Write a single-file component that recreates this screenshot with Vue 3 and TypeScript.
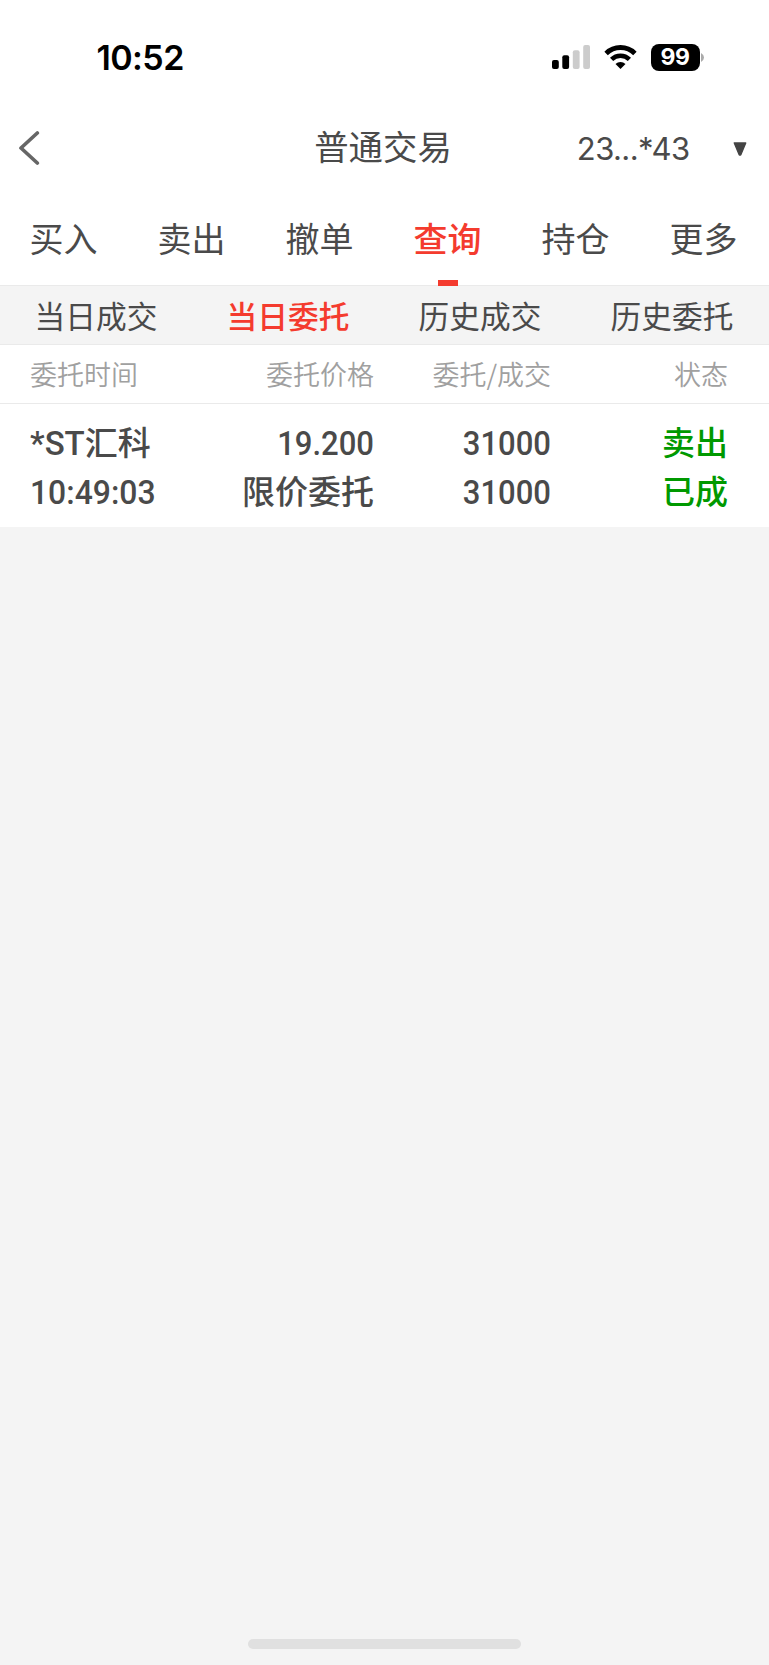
<script setup lang="ts">
interface Tab {
  label: string
  active?: boolean
}

const tabs: Tab[] = [
  { label: '买入' },
  { label: '卖出' },
  { label: '撤单' },
  { label: '查询', active: true },
  { label: '持仓' },
  { label: '更多' },
]

const subTabs: Tab[] = [
  { label: '当日成交' },
  { label: '当日委托', active: true },
  { label: '历史成交' },
  { label: '历史委托' },
]

const columns: string[] = ['委托时间', '委托价格', '委托/成交', '状态']

const order = {
  name: '汇科',
  prefix: '*ST',
  time: '10:49:03',
  price: '19.200',
  type: '限价委托',
  ordered: '31000',
  filled: '31000',
  side: '卖出',
  status: '已成',
}
</script>

<template>
  <main class="screen">
    <header class="status-bar">
      <span class="clock">10:52</span>
      <div class="indicators">
        <svg class="signal" width="38" height="24" viewBox="0 0 38 24">
          <rect x="0" y="15" width="6.8" height="9" rx="2" fill="#000" />
          <rect x="10.3" y="10.2" width="6.8" height="13.8" rx="2" fill="#000" />
          <rect x="20.8" y="5.2" width="6.8" height="18.8" rx="2" fill="#ccc" />
          <rect x="31.2" y="0" width="6.8" height="24" rx="2" fill="#ccc" />
        </svg>
        <svg class="wifi" width="33" height="24" viewBox="0 0 33 24">
          <path d="M2.1 8.4a20.6 20.6 0 0 1 28.8 0" fill="none" stroke="#000" stroke-width="4.9" />
          <path d="M7.6 14.3a12.8 12.8 0 0 1 17.8 0" fill="none" stroke="#000" stroke-width="4.6" />
          <path d="M11.5 18.9a7.2 7.2 0 0 1 10 0L16.5 24z" fill="#000" />
        </svg>
        <div class="battery">99</div>
        <svg class="battery-tip" width="3" height="9" viewBox="0 0 3 9">
          <path d="M0 0Q3 1.7 3 4.5T0 9z" fill="#aaa" />
        </svg>
      </div>
    </header>

    <nav class="title-bar">
      <svg class="back" width="21" height="34" viewBox="0 0 21 34">
        <path d="M18.3 2L2 17l16.3 15" fill="none" stroke="#666" stroke-width="3.7" stroke-linecap="round" stroke-linejoin="round" />
      </svg>
      <h1 class="title">普通交易</h1>
      <div class="account">
        <span>23...*43</span>
        <svg class="caret" width="14" height="14" viewBox="0 0 14 14">
          <path d="M1.3 1h11.4L7.8 12.7Q7 13.5 6.2 12.7z" fill="#444" stroke="#444" stroke-width="1.4" stroke-linejoin="round" />
        </svg>
      </div>
    </nav>

    <div class="tabs">
      <div v-for="tab in tabs" :key="tab.label" class="tab" :class="{ active: tab.active }">
        {{ tab.label }}
      </div>
    </div>

    <div class="sub-tabs">
      <div v-for="tab in subTabs" :key="tab.label" class="sub-tab" :class="{ active: tab.active }">
        {{ tab.label }}
      </div>
    </div>

    <div class="grid head">
      <span v-for="column in columns" :key="column">{{ column }}</span>
    </div>

    <section class="grid order">
      <div class="cell">
        <div class="name"><span class="prefix">{{ order.prefix }}</span><span class="cjk">{{ order.name }}</span></div>
        <span class="num time">{{ order.time }}</span>
      </div>
      <div class="cell">
        <span class="num">{{ order.price }}</span>
        <span class="cjk">{{ order.type }}</span>
      </div>
      <div class="cell">
        <span class="num">{{ order.ordered }}</span>
        <span class="num">{{ order.filled }}</span>
      </div>
      <div class="cell sell">
        <span class="cjk">{{ order.side }}</span>
        <span class="cjk">{{ order.status }}</span>
      </div>
    </section>

    <footer class="home"><i class="home-bar"></i></footer>
  </main>
</template>

<style>
body {
  margin: 0;
  background: #f4f4f4;
}
</style>

<style scoped>
.screen {
  display: flex;
  flex-direction: column;
  width: 769px;
  height: 1665px;
  overflow: hidden;
  background: #f4f4f4;
  color: #4a4a4a;
  font-family: "Noto Sans CJK SC", sans-serif;
  white-space: nowrap;
}

.status-bar {
  display: flex;
  flex: none;
  justify-content: space-between;
  box-sizing: border-box;
  height: 104px;
  padding: 38px 65.5px 0 96.5px;
  background: #fff;
  color: #000;
  font-family: Inter, sans-serif;
}

.clock {
  font-size: 34px;
  font-weight: 600;
  line-height: 40px;
  letter-spacing: -0.6px;
}

.indicators {
  display: flex;
  align-items: center;
  height: 38px;
}

.wifi {
  margin: 0 14px;
}

.battery {
  width: 49px;
  height: 27px;
  border-radius: 8px;
  background: #000;
  color: #fff;
  font-size: 23px;
  font-weight: 700;
  line-height: 27px;
  letter-spacing: -0.4px;
  text-align: center;
}

.battery-tip {
  margin-left: 1px;
}

.title-bar {
  display: grid;
  flex: none;
  grid-template-columns: 1fr auto 1fr;
  align-items: center;
  height: 88px;
  padding: 0 22px 0 19px;
  background: #fff;
}

.title {
  margin: 0;
  font-size: 34.4px;
  font-weight: 400;
  line-height: 83px;
  height: 88px;
}

.account {
  display: flex;
  align-items: center;
  justify-content: flex-end;
  gap: 43.5px;
  font-family: Inter, sans-serif;
  font-size: 31px;
  letter-spacing: -0.6px;
}

.caret {
  margin-top: 2px;
}

.tabs {
  display: grid;
  flex: none;
  grid-template-columns: repeat(6, 128px);
  height: 93px;
  border-bottom: 1px solid #eaeaea;
  background: #fff;
}

.tab {
  position: relative;
  font-size: 34px;
  line-height: 91px;
  text-align: center;
  text-indent: -1px;
}

.tab.active {
  color: #f43b2e;
  font-weight: 500;
}

.tab.active::after {
  position: absolute;
  bottom: -1px;
  left: calc(50% - 10px);
  width: 20px;
  height: 6px;
  background: #f43b2e;
  content: "";
}

.sub-tabs {
  display: grid;
  flex: none;
  grid-template-columns: repeat(4, 192px);
  height: 58px;
  border-bottom: 1px solid #eaeaea;
}

.sub-tab {
  font-size: 30.7px;
  line-height: 58px;
  text-align: center;
}

.sub-tab.active {
  color: #f43b2e;
  font-weight: 500;
}

.grid {
  display: grid;
  flex: none;
  grid-template-columns: 170px 174px 177px 177px;
  padding: 0 41px 0 30px;
  background: #fff;
  text-align: right;
}

.grid > :first-child {
  text-align: left;
}

.head {
  height: 58px;
  border-bottom: 1px solid #eaeaea;
  color: #a0a0a0;
  font-size: 27px;
  font-weight: 350;
  line-height: 57px;
}

.order {
  box-sizing: border-box;
  height: 123px;
  padding-top: 15px;
  font-size: 33px;
  font-weight: 500;
  line-height: 48.5px;
}

.cell {
  display: flex;
  flex-direction: column;
}

.name {
  display: flex;
}

.cjk {
  height: 48.5px;
  line-height: 45px;
}

.num,
.prefix {
  height: 48.5px;
  line-height: 49px;
  font-family: Roboto, sans-serif;
}

.num {
  transform: scaleX(0.94);
  transform-origin: right;
}

.time {
  transform: scaleX(0.966);
  transform-origin: left;
}

.sell {
  color: #090;
}

.home {
  display: flex;
  justify-content: center;
  margin-top: auto;
  padding-bottom: 16px;
}

.home-bar {
  width: 273px;
  height: 10px;
  border-radius: 5px;
  background: #e0e0e0;
}
</style>
